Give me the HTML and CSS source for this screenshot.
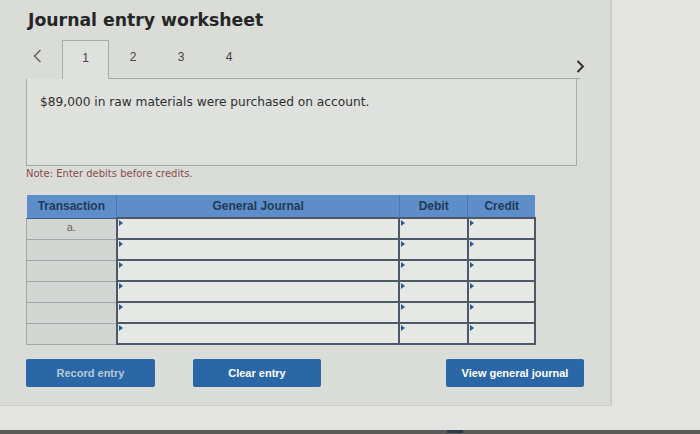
FILE: index.html
```html
<!DOCTYPE html>
<html lang="en">
<head>
    <meta charset="UTF-8">
    <meta name="viewport" content="width=device-width, initial-scale=1.0">
    <title>Journal entry worksheet</title>
    <link rel="stylesheet" href="styles.css">
</head>
<body>
    <div class="panel">
        <h1>Journal entry worksheet</h1>

        <div class="tabs">
            <span class="arrow prev">
                <svg width="9" height="14" viewBox="0 0 9 14"><path d="M7.5 1 L1.5 7 L7.5 13" fill="none" stroke="#666" stroke-width="1.6"/></svg>
            </span>
            <span class="tab active">1</span>
            <span class="tab">2</span>
            <span class="tab">3</span>
            <span class="tab">4</span>
            <span class="tab-fill"></span>
            <span class="arrow next">
                <svg width="9" height="13" viewBox="0 0 9 13"><path d="M1.5 1 L7 6.5 L1.5 12" fill="none" stroke="#333" stroke-width="2"/></svg>
            </span>
        </div>

        <div class="question">
            $89,000 in raw materials were purchased on account.
        </div>

        <p class="note">Note: Enter debits before credits.</p>

        <table class="journal">
            <thead>
                <tr>
                    <th class="col-trans">Transaction</th>
                    <th class="col-account">General Journal</th>
                    <th class="col-debit">Debit</th>
                    <th class="col-credit">Credit</th>
                </tr>
            </thead>
            <tbody>
                <tr>
                    <td class="trans">a.</td>
                    <td class="entry"></td>
                    <td class="entry"></td>
                    <td class="entry"></td>
                </tr>
                <tr>
                    <td class="trans"></td>
                    <td class="entry"></td>
                    <td class="entry"></td>
                    <td class="entry"></td>
                </tr>
                <tr>
                    <td class="trans"></td>
                    <td class="entry"></td>
                    <td class="entry"></td>
                    <td class="entry"></td>
                </tr>
                <tr>
                    <td class="trans"></td>
                    <td class="entry"></td>
                    <td class="entry"></td>
                    <td class="entry"></td>
                </tr>
                <tr>
                    <td class="trans"></td>
                    <td class="entry"></td>
                    <td class="entry"></td>
                    <td class="entry"></td>
                </tr>
                <tr>
                    <td class="trans"></td>
                    <td class="entry"></td>
                    <td class="entry"></td>
                    <td class="entry"></td>
                </tr>
            </tbody>
        </table>

        <div class="actions">
            <button class="btn record" disabled>Record entry</button>
            <button class="btn clear">Clear entry</button>
            <button class="btn view">View general journal</button>
        </div>
    </div>

    <div class="footer">
        <span class="grip"></span>
    </div>
</body>
</html>
```

FILE: styles.css
```css
body {
    margin: 0;
    background-color: #e3e4e1;
    font-family: "DejaVu Sans", Verdana, sans-serif;
    color: #2b2b2b;
    width: 700px;
    height: 434px;
    overflow: hidden;
}
.panel {
    width: 584px;
    height: 405px;
    padding-left: 26px;
    background-color: #dadcd8;
    border-right: 2px solid #cbcdc9;
    border-bottom: 1px solid #cbcdc9;
}
h1 {
    margin: 0;
    padding: 10px 0 0 2px;
    height: 30px;
    font-size: 17.3px;
    font-weight: bold;
    color: #262626;
}
.tabs {
    display: flex;
    width: 553px;
    height: 39px;
}
.tabs .arrow svg {
    display: block;
}
.tabs .prev {
    width: 36px;
    padding-left: 7px;
    padding-top: 9px;
    box-sizing: border-box;
}
.tabs .next {
    align-self: flex-end;
    margin-bottom: 6px;
    margin-left: -4px;
    margin-right: -9px;
    width: 12px;
}
.tab {
    width: 48px;
    padding-top: 10px;
    text-align: center;
    font-family: "Liberation Sans", Arial, sans-serif;
    font-size: 12px;
    color: #444;
    border-bottom: 1px solid #a9aba8;
    box-sizing: border-box;
}
.tab.active {
    width: 47px;
    background-color: #dfe1de;
    border: 1px solid #a9aba8;
    border-bottom: none;
}
.tab-fill {
    flex: 1;
    border-bottom: 1px solid #a9aba8;
}
.question {
    width: 551px;
    height: 87px;
    box-sizing: border-box;
    padding: 16px 0 0 13px;
    background-color: #dfe1de;
    border: 1px solid #a9aba8;
    border-top: none;
    font-size: 12.2px;
    color: #2f2f2f;
}
.note {
    margin: 0;
    padding: 2px 0 0 0;
    height: 27px;
    font-size: 10px;
    color: #8a4b4b;
}
.journal {
    border-collapse: collapse;
    width: 510px;
    font-family: "Liberation Sans", Arial, sans-serif;
}
.journal th {
    height: 22px;
    padding: 0;
    background-color: #5d8ec9;
    color: #223a58;
    font-size: 12px;
    font-weight: bold;
    border-left: 1px solid #4a78b0;
    border-bottom: 1px solid #3e5f86;
}
.journal th:first-child {
    border-left: none;
}
.col-trans {
    width: 90px;
}
.col-account {
    width: 285px;
}
.col-debit {
    width: 68px;
}
.col-credit {
    width: 67px;
}
.journal td {
    height: 18px;
    padding: 0;
}
.journal .trans {
    background-color: #d3d5d2;
    border: 1px solid #a3a7aa;
    text-align: center;
    vertical-align: top;
    font-size: 11px;
    color: #666;
    padding-top: 2px;
}
.journal .entry {
    position: relative;
    background-color: #e6e8e5;
    border: 2px solid #4d5966;
}
.journal .entry::before {
    content: "";
    position: absolute;
    top: 1px;
    left: 1px;
    border-top: 3px solid transparent;
    border-bottom: 3px solid transparent;
    border-left: 4px solid #2d5a8c;
}
.actions {
    display: flex;
    margin-top: 14px;
}
.btn {
    height: 28px;
    border: none;
    border-radius: 2px;
    background-color: #2b67a6;
    color: #ffffff;
    font-family: "Liberation Sans", Arial, sans-serif;
    font-size: 11px;
    font-weight: bold;
    padding: 0;
}
.btn.record {
    width: 129px;
    color: #b9c7d6;
}
.btn.clear {
    width: 128px;
    margin-left: 38px;
}
.btn.view {
    width: 138px;
    margin-left: 125px;
}
.footer {
    position: relative;
    height: 28px;
    border-bottom: 4px solid #5a5a58;
    box-sizing: border-box;
}
.grip {
    position: absolute;
    left: 447px;
    bottom: -3px;
    width: 16px;
    height: 3px;
    background-color: #2c3a4a;
}
```
